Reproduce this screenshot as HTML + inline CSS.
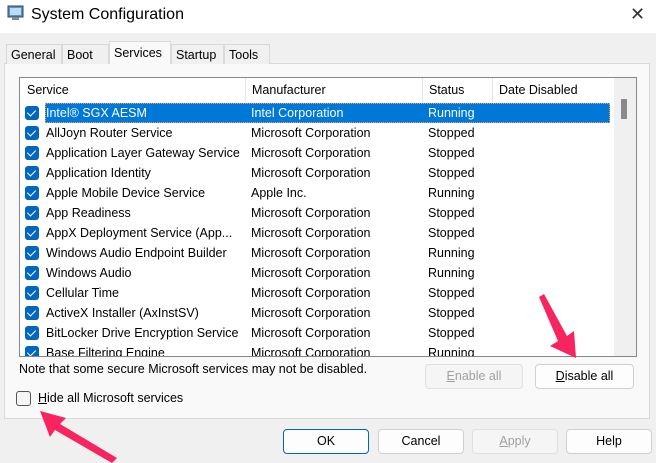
<!DOCTYPE html>
<html><head><style>
*{margin:0;padding:0;box-sizing:border-box}
body{width:656px;height:463px;background:#f0f0f0;font-family:"Liberation Sans",sans-serif;font-size:12.5px;color:#000;position:relative;overflow:hidden}
.abs{position:absolute}
.title{left:0;top:0;width:656px;height:33px;background:#fff}
.tab{position:absolute;top:44px;height:20px;border:1px solid #d9d9d9;border-bottom:none;background:#f0f0f0;padding:3px 4px;font-size:12.5px}
.panel{left:4px;top:63px;width:646px;height:356px;border:1px solid #d9d9d9;background:#f9f9f9}
.list{left:19px;top:77px;width:618px;height:280px;border:1px solid #828790;background:#fff;overflow:hidden}
.row{position:absolute;left:0;height:20px;width:594px;line-height:20px;font-size:12.5px}
.row span{position:absolute}
.cb{position:absolute;left:5px;top:3px;width:14px;height:14px;border-radius:3px;background:#0067c0}
.cb:after{content:"";position:absolute;left:4px;top:2px;width:4px;height:7px;border:solid #fff;border-width:0 1.5px 1.5px 0;transform:rotate(45deg)}
.btn{position:absolute;height:25px;border:1px solid #d0d0d0;border-radius:4px;background:#fdfdfd;text-align:center;line-height:23px;font-size:12.5px}
.dis{color:#a0a0a0;background:#f5f5f5;border-color:#e0e0e0}
</style></head><body>
<div class="abs title"></div>
<svg class="abs" style="left:7px;top:5px" width="18" height="16"><rect x="1" y="1" width="15" height="11" fill="#5b8fd0" stroke="#345"/><rect x="3" y="3" width="11" height="7" fill="#bde"/><rect x="5" y="12" width="7" height="3" fill="#888"/></svg>
<div class="abs" style="left:31px;top:6px;font-size:16px">System Configuration</div>
<div class="abs" style="left:630px;top:4px;font-size:18px;color:#333">✕</div>
<div class="abs panel"></div>
<div class="tab" style="left:6px;width:56px">General</div>
<div class="tab" style="left:62px;width:47px">Boot</div>
<div class="tab" style="left:109px;top:41px;height:23px;width:62px;background:#f9f9f9;padding-top:4px">Services</div>
<div class="tab" style="left:171px;width:53px">Startup</div>
<div class="tab" style="left:224px;width:46px">Tools</div>
<div class="abs list">
<div class="row" style="top:0;height:25px;line-height:25px"><span style="left:7px">Service</span><span style="left:232px">Manufacturer</span><span style="left:409px">Status</span><span style="left:479px">Date Disabled</span></div>
<div class="abs" style="left:225px;top:0;width:1px;height:24px;background:#e5e5e5"></div>
<div class="abs" style="left:402px;top:0;width:1px;height:24px;background:#e5e5e5"></div>
<div class="abs" style="left:472px;top:0;width:1px;height:24px;background:#e5e5e5"></div>
<div class="abs" style="left:594px;top:0;width:23px;height:280px;background:#f0f0f0"></div>
<div class="abs" style="left:601px;top:21px;width:6px;height:20px;background:#8a8a8a"></div>
<div class="abs" style="left:25px;top:25px;width:565px;height:20px;background:#0078d7;border:1px dotted #f4a460"></div>
<div id="rows"></div>
</div>
<script>
var d=[["Intel® SGX AESM","Intel Corporation","Running"],["AllJoyn Router Service","Microsoft Corporation","Stopped"],["Application Layer Gateway Service","Microsoft Corporation","Stopped"],["Application Identity","Microsoft Corporation","Stopped"],["Apple Mobile Device Service","Apple Inc.","Running"],["App Readiness","Microsoft Corporation","Stopped"],["AppX Deployment Service (App...","Microsoft Corporation","Stopped"],["Windows Audio Endpoint Builder","Microsoft Corporation","Running"],["Windows Audio","Microsoft Corporation","Running"],["Cellular Time","Microsoft Corporation","Stopped"],["ActiveX Installer (AxInstSV)","Microsoft Corporation","Stopped"],["BitLocker Drive Encryption Service","Microsoft Corporation","Stopped"],["Base Filtering Engine","Microsoft Corporation","Running"]];
var h="";d.forEach(function(r,i){var c=i==0?"color:#fff":"";h+='<div class="row" style="top:'+(25+i*20)+'px;'+c+'"><div class="cb"></div><span style="left:26px">'+r[0]+'</span><span style="left:231px">'+r[1]+'</span><span style="left:408px">'+r[2]+'</span></div>';});
document.getElementById("rows").innerHTML=h;
</script>
<div class="abs" style="left:19px;top:362px">Note that some secure Microsoft services may not be disabled.</div>
<div class="btn dis" style="left:425px;top:364px;width:98px"><u>E</u>nable all</div>
<div class="btn" style="left:535px;top:364px;width:99px"><u>D</u>isable all</div>
<div class="abs" style="left:16px;top:391px;width:15px;height:15px;border:1px solid #555;border-radius:3px;background:#f5f5f5"></div>
<div class="abs" style="left:38px;top:391px"><u>H</u>ide all Microsoft services</div>
<div class="btn" style="left:283px;top:429px;width:86px;border:1px solid #0067c0">OK</div>
<div class="btn" style="left:378px;top:429px;width:86px">Cancel</div>
<div class="btn dis" style="left:472px;top:429px;width:86px"><u>A</u>pply</div>
<div class="btn" style="left:566px;top:429px;width:86px">Help</div>
<svg class="abs" style="left:0;top:0" width="656" height="463">
<polygon points="539,297 544,294 567,336 574,331 576,358 550,346 558,341" fill="#f7245f"/>
<polygon points="40,411 66,418 60,424 117,458 112,463 55,430 50,437" fill="#f7245f"/>
</svg>
</body></html>
